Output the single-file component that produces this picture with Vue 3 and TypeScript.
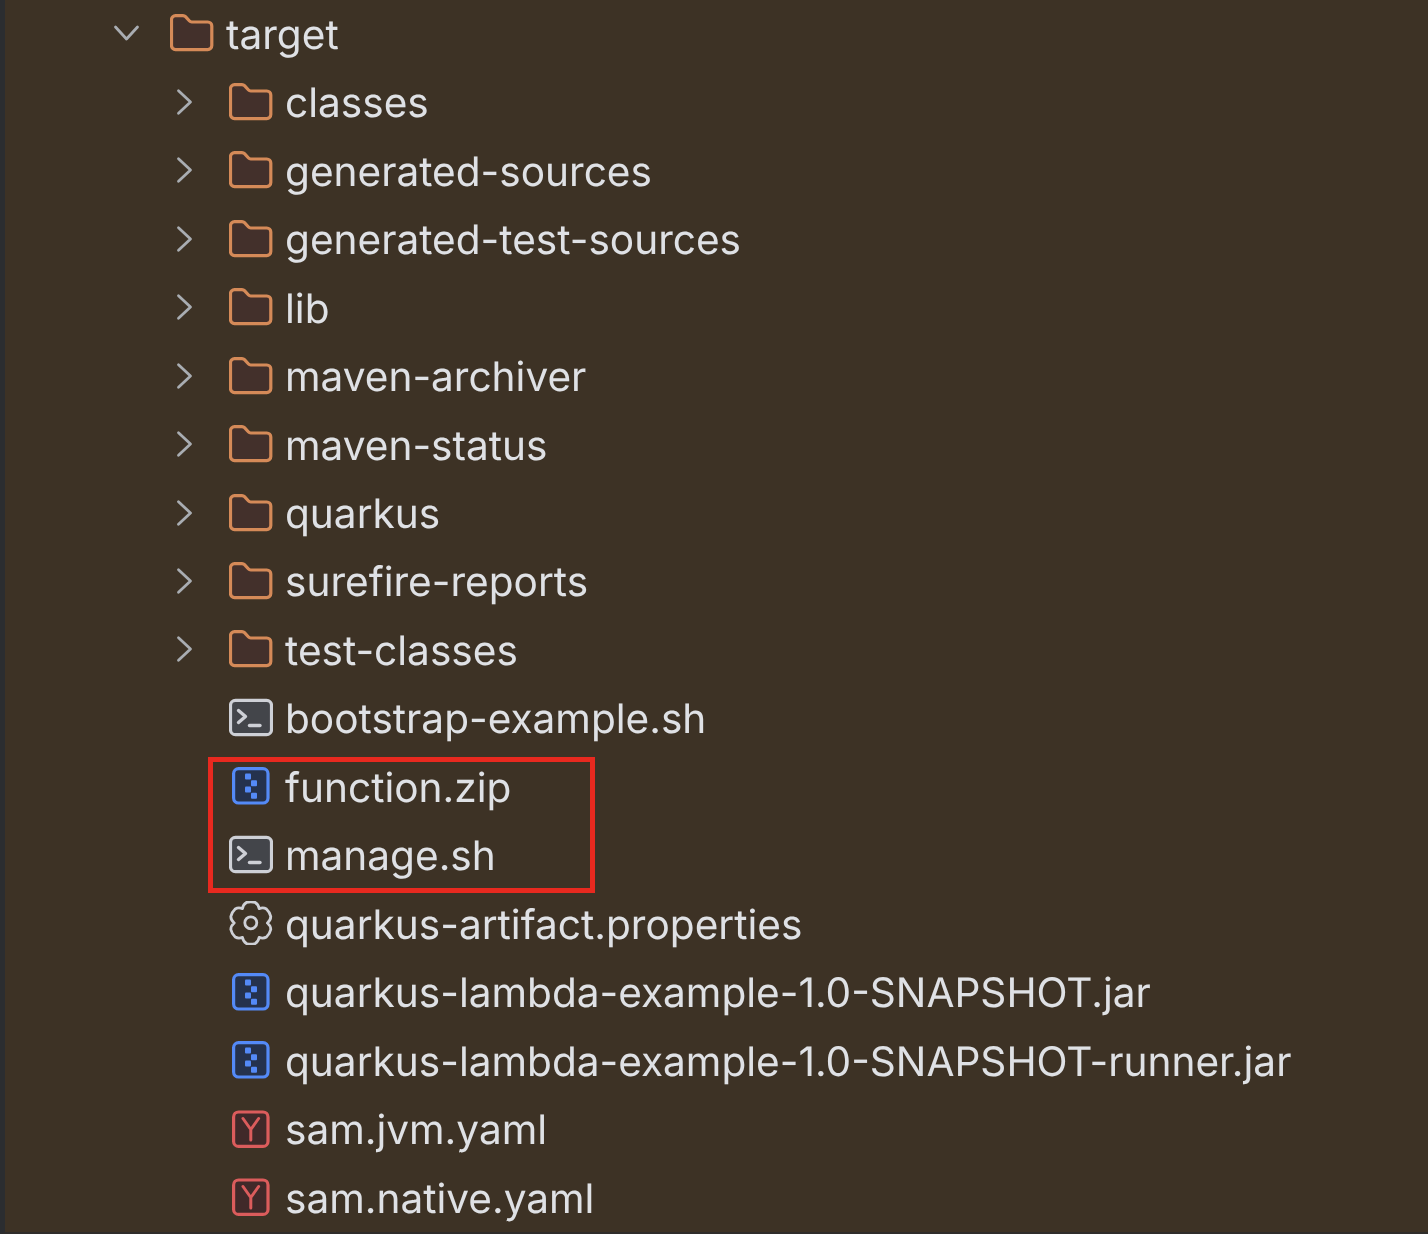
<script setup lang="ts">
type Kind = 'folder' | 'shell' | 'archive' | 'gear' | 'yaml'
interface Row { name: string; kind: Kind; arrow?: 'open' | 'closed'; root?: boolean }

const folders = ['classes', 'generated-sources', 'generated-test-sources', 'lib', 'maven-archiver', 'maven-status', 'quarkus', 'surefire-reports', 'test-classes']
const rows: Row[] = [
  { name: 'target', kind: 'folder', arrow: 'open', root: true },
  ...folders.map((name): Row => ({ name, kind: 'folder', arrow: 'closed' })),
  { name: 'bootstrap-example.sh', kind: 'shell' },
  { name: 'function.zip', kind: 'archive' },
  { name: 'manage.sh', kind: 'shell' },
  { name: 'quarkus-artifact.properties', kind: 'gear' },
  { name: 'quarkus-lambda-example-1.0-SNAPSHOT.jar', kind: 'archive' },
  { name: 'quarkus-lambda-example-1.0-SNAPSHOT-runner.jar', kind: 'archive' },
  { name: 'sam.jvm.yaml', kind: 'yaml' },
  { name: 'sam.native.yaml', kind: 'yaml' },
]

// Six rounded lobes around the centre of the settings icon.
function polar(r: number, deg: number): string {
  const a = (deg * Math.PI) / 180
  return `${(21.8 + r * Math.cos(a)).toFixed(2)} ${(22 + r * Math.sin(a)).toFixed(2)}`
}
const outer = 21
const valley = 16.6
let gear = `M${polar(valley, -120)}`
for (let i = 0; i < 6; i++) {
  const a = -90 + i * 60
  gear += ` Q${polar(outer - 0.8, a - 22)} ${polar(outer, a - 12)}`
  gear += ` Q${polar(outer + 0.9, a)} ${polar(outer, a + 12)}`
  gear += ` Q${polar(outer - 0.8, a + 22)} ${polar(valley, a + 30)}`
}
gear += ' Z'
</script>

<template>
  <div class="page">
    <div class="tree">
      <div v-for="row in rows" :key="row.name" class="row" :class="{ root: row.root }">
        <span class="arrow">
          <svg v-if="row.arrow === 'open'" width="28" height="28" viewBox="0 0 28 28" fill="none">
            <path d="M3.500 8 14.500 20 25.500 8" stroke="#a9adb2" stroke-width="2.800" stroke-linecap="round" stroke-linejoin="round" />
          </svg>
          <svg v-else-if="row.arrow === 'closed'" width="28" height="28" viewBox="0 0 28 28" fill="none">
            <path d="M7.500 2.800 19.500 14 7.500 25.200" stroke="#a9adb2" stroke-width="2.800" stroke-linecap="round" stroke-linejoin="round" />
          </svg>
        </span>
        <svg class="icon" width="44" height="44" viewBox="0 0 44 44" fill="none">
          <template v-if="row.kind === 'folder'">
            <path d="M1.500 8.600a4 4 0 0 1 4-4H13a3.500 3.500 0 0 1 2.500 1.100l4 4.300a3 3 0 0 0 2.200 1h16.100a4 4 0 0 1 4 4v19.600a4 4 0 0 1-4 4H5.500a4 4 0 0 1-4-4Z" fill="#43302b" stroke="#d58a58" stroke-width="3.200" stroke-linejoin="round" />
          </template>
          <template v-else-if="row.kind === 'shell'">
            <rect x="1.500" y="4.300" width="41" height="34.400" rx="5" fill="#43454a" stroke="#ced0d6" stroke-width="3.200" />
            <path d="M9.500 14.500 16.500 20.500 9.500 26.500" stroke="#ced0d6" stroke-width="3.400" stroke-linecap="round" stroke-linejoin="round" />
            <path d="M20.500 29.500H31" stroke="#ced0d6" stroke-width="3.400" stroke-linecap="round" />
          </template>
          <template v-else-if="row.kind === 'archive'">
            <rect x="4.600" y="4.600" width="34.400" height="34.400" rx="5" fill="#25324d" stroke="#548af7" stroke-width="3.200" />
            <g fill="#548af7">
              <rect x="16" y="9.500" width="6" height="6" rx="1" />
              <rect x="22" y="16.300" width="6" height="6" rx="1" />
              <rect x="16" y="22.500" width="6" height="6" rx="1" />
              <rect x="22" y="28.800" width="6" height="6" rx="1" />
            </g>
          </template>
          <template v-else-if="row.kind === 'gear'">
            <path :d="gear" stroke="#ced0d6" stroke-width="2.800" stroke-linejoin="round" />
            <circle cx="21.800" cy="21.800" r="6" stroke="#ced0d6" stroke-width="2.800" />
          </template>
          <template v-else>
            <rect x="4.600" y="5" width="34.400" height="34.400" rx="5" fill="#402929" stroke="#db5c5c" stroke-width="3.200" />
            <path d="M14 11.500 21.800 22.500 29.600 11.500M21.800 22.500V33" stroke="#db5c5c" stroke-width="3" stroke-linecap="round" stroke-linejoin="round" />
          </template>
        </svg>
        <span class="name">{{ row.name }}</span>
      </div>
      <div class="mark"></div>
    </div>
  </div>
</template>

<style>
html, body { margin: 0; background: #3d3225; }
</style>

<style scoped>
.page {
  height: 1234px;
  box-sizing: border-box;
  overflow: hidden;
  background: #3d3225;
  border-left: 5px solid #2b2d30;
  border-bottom: 2px solid #2f2d2b;
  font-family: Inter, "Noto Sans", sans-serif;
}
.tree {
  position: relative;
  padding-top: 1px;
}
.row {
  height: 68.47px;
  display: flex;
  align-items: center;
  padding-left: 166px;
  color: #dfe1e5;
  font-size: 40.600px;
  font-weight: 440;
  font-variation-settings: "opsz" 14;
  text-rendering: geometricPrecision;
  white-space: nowrap;
}
.row.root { padding-left: 107px; }
.arrow {
  width: 28px;
  height: 28px;
  margin: -4px 30px 0 0;
  flex: none;
}
.arrow svg { display: block; }
.icon { flex: none; margin-top: -4px; filter: blur(0.5px); }
.name { margin: -2px 0 0 12px; filter: blur(0.5px); }
.mark {
  position: absolute;
  left: 203px;
  top: 756.500px;
  width: 387px;
  height: 136px;
  box-sizing: border-box;
  border: 5px solid #e8291f;
}
</style>
